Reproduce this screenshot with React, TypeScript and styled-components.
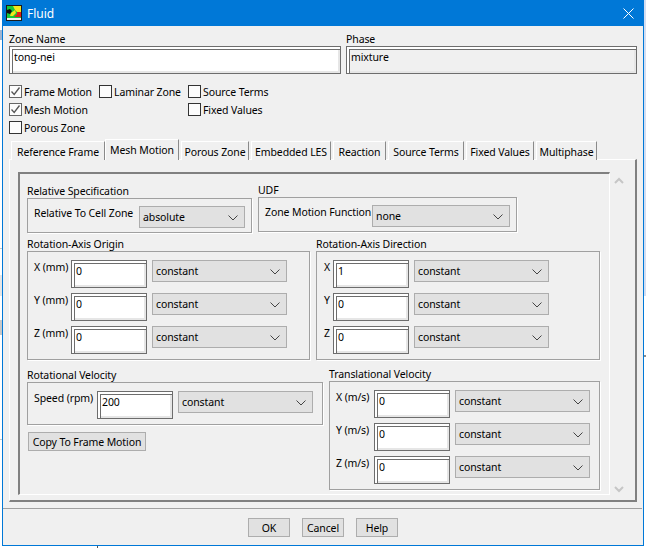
import React from "react";
import styled, { createGlobalStyle } from "styled-components";

const Global = createGlobalStyle`
  html, body { margin: 0; padding: 0; background: #fff; }
  body { font-family: "Noto Sans", "Open Sans", sans-serif; font-size: 10.5px; letter-spacing: -0.1px; color: #000; overflow: hidden; }
  * { box-sizing: border-box; }
`;

const Page = styled.div`
  width: 646px;
  height: 548px;
  padding-left: 2px;
  background:
    linear-gradient(#d3def2, #d3def2) 644px 0 / 2px 296px no-repeat,
    linear-gradient(#8c8c8c, #8c8c8c) 644px 355px / 2px 2px no-repeat,
    linear-gradient(#9fb4d0, #9fb4d0) 0 30px / 2px 10px no-repeat,
    linear-gradient(#c8c8c8, #c8c8c8) 0 248px / 2px 1px no-repeat,
    linear-gradient(#e6e6e6, #e6e6e6) 0 275px / 2px 21px no-repeat,
    linear-gradient(#c8c8c8, #c8c8c8) 0 320px / 2px 15px no-repeat,
    linear-gradient(#c8c8c8, #c8c8c8) 0 439px / 2px 1px no-repeat,
    linear-gradient(#555, #555) 97px 546px / 1px 2px no-repeat,
    #fff;
`;

const Window = styled.div`
  width: 642px;
  height: 546px;
  border: 1px solid #0078d7;
  border-top: 0;
  background: #f0f0f0;
  display: flex;
  flex-direction: column;
`;

const TitleBar = styled.div`
  height: 26px;
  flex: none;
  background: #0078d7;
  color: #fff;
  display: flex;
  align-items: center;
  padding: 0 9px 0 3px;
  font-size: 12px;
  letter-spacing: 0;
`;

const TitleText = styled.span`
  margin-left: 5px;
  flex: 1;
`;

const Form = styled.div`
  padding: 7px 0 0 6px;
  flex: 1;
  display: flex;
  flex-direction: column;
`;

const NameRow = styled.div`
  display: flex;
  gap: 5px;
`;

const Field = styled.div<{ $w: number }>`
  width: ${(p) => p.$w}px;
`;

const Caption = styled.div`
  height: 13px;
  line-height: 12px;
  white-space: nowrap;
`;

const TextBox = styled.input<{ $w?: number; $off?: boolean }>`
  display: block;
  width: ${(p) => (p.$w ? `${p.$w}px` : "100%")};
  height: 28px;
  flex: none;
  border: 1px solid #6d6d6d;
  outline: 0;
  margin: 0;
  padding: 3px 3px 10px 4px;
  font: inherit;
  letter-spacing: inherit;
  line-height: 13px;
  color: #000;
  background: ${(p) => (p.$off ? "#f0f0f0" : "#fff")};
  box-shadow: inset 2px 2px 0 0 #fff, inset 3px 3px 0 0 #6d6d6d, inset -2px -2px 0 0 #e6e6e6;
`;

const ChecksGrid = styled.div`
  display: grid;
  grid-template-columns: 90px 89px 1fr;
  grid-auto-rows: 18px;
  margin-top: 11px;
`;

const CheckItem = styled.div`
  display: flex;
  align-items: flex-start;
  gap: 2px;
  line-height: 15px;
`;

const CheckSquare = styled.span<{ $on?: boolean }>`
  width: 13px;
  height: 13px;
  flex: none;
  border: 1px solid ${(p) => (p.$on ? "#666" : "#333")};
  background: #fcfcfc;
  display: flex;
`;

const TabStrip = styled.div`
  display: flex;
  align-items: flex-end;
  height: 21px;
  padding-left: 2px;
  position: relative;
  z-index: 1;
  margin-bottom: -1px;
`;

const Tab = styled.div<{ $w: number; $on?: boolean; $gap?: number }>`
  width: ${(p) => p.$w}px;
  margin-right: ${(p) => p.$gap ?? 2}px;
  height: ${(p) => (p.$on ? 21 : 19)}px;
  padding: ${(p) => (p.$on ? "1px 0 1px" : "3px 0 0")};
  background: #f0f0f0;
  border-top: 1px solid #fff;
  border-left: 1px solid #fff;
  border-right: 1px solid #8a8a8a;
  display: flex;
  align-items: center;
  justify-content: center;
  white-space: nowrap;
  line-height: 13px;
`;

const TabPanel = styled.div`
  width: 628px;
  height: 343px;
  display: flex;
  padding: 12px 0 7px 8px;
  border-top: 1px solid #fff;
  border-left: 1px solid #fff;
  border-right: 2px solid #808080;
  border-bottom: 2px solid #808080;
`;

const ScrollFrame = styled.div`
  width: 592px;
  height: 323px;
  flex: none;
  padding: 11px 0 0 7px;
  border-top: 2px solid #808080;
  border-left: 2px solid #808080;
  border-right: 1px solid #fff;
  border-bottom: 1px solid #fff;
  display: flex;
  flex-direction: column;
`;

const ScrollTrack = styled.div`
  flex: 1;
  display: flex;
  flex-direction: column;
  justify-content: space-between;
  align-items: center;
  padding: 5px 8px 0 0;
`;

const Row = styled.div<{ $gap?: number }>`
  display: flex;
  gap: 6px;
  margin-top: ${(p) => p.$gap ?? 0}px;
`;

const Column = styled.div`
  display: flex;
  flex-direction: column;
`;

const Group = styled.div<{ $w: number; $up?: boolean }>`
  width: ${(p) => p.$w}px;
  margin-top: ${(p) => (p.$up ? -1 : 0)}px;
`;

const GroupBox = styled.div<{ $h: number; $inset?: number; $top?: number }>`
  height: ${(p) => p.$h}px;
  border: 1px solid #a0a0a0;
  box-shadow: 1px 1px 0 #fff;
  padding: ${(p) => p.$top ?? 8}px 0 0 ${(p) => p.$inset ?? 6}px;
  display: flex;
  flex-direction: column;
  gap: 5px;
`;

const ControlRow = styled.div`
  display: flex;
  align-items: flex-start;
`;

const FieldLabel = styled.div<{ $w: number }>`
  width: ${(p) => p.$w}px;
  flex: none;
  line-height: 14px;
  white-space: nowrap;
`;

const Select = styled.div<{ $w?: number }>`
  width: ${(p) => p.$w ?? 135}px;
  height: 22px;
  flex: none;
  margin-left: 5px;
  background: #e1e1e1;
  border: 1px solid #adadad;
  display: flex;
  align-items: center;
  justify-content: space-between;
  padding: 1px 6px 0 3px;
  line-height: 13px;
`;

const PushButton = styled.div<{ $w: number }>`
  width: ${(p) => p.$w}px;
  height: 19px;
  padding-top: 1px;
  background: #e1e1e1;
  border: 1px solid #adadad;
  display: flex;
  align-items: center;
  justify-content: center;
  line-height: 13px;
  white-space: nowrap;
`;

const CopyWrap = styled.div`
  margin: 7px 0 0 1px;
`;

const Separator = styled.div`
  height: 1px;
  margin: 6px 1px 0 -6px;
  background: #a0a0a0;
`;

const Footer = styled.div`
  display: flex;
  justify-content: center;
  gap: 12px;
  margin: 9px 0 0 -6px;
`;

const Chevron = () => (
  <svg width="10" height="6" viewBox="0 0 10 6" fill="none">
    <path d="M0.5 0.5 L5 5 L9.5 0.5" stroke="#444" strokeWidth="1" />
  </svg>
);

const ScrollArrow = ({ up }: { up?: boolean }) => (
  <svg width="10" height="7" viewBox="0 0 10 7" fill="none">
    <path d={up ? "M1 6 L5 2 L9 6" : "M1 1 L5 5 L9 1"} stroke="#c6c6c6" strokeWidth="2" />
  </svg>
);

const CheckMark = () => (
  <svg width="11" height="11" viewBox="0 0 11 11" fill="none">
    <path d="M1.5 5.5 L4.2 8.5 L9.5 1.5" stroke="#555" strokeWidth="1.3" />
  </svg>
);

const FluentIcon = () => (
  <svg width="16" height="16" viewBox="0 0 16 16">
    <rect width="16" height="16" fill="#1a1a1a" />
    <rect x="1" y="1" width="14" height="12" fill="#16c83a" />
    <path d="M7 1 H15 V7 H11 L9 5 Z" fill="#f4e61c" />
    <path d="M11 7 H15 V12 H8 L11 9 Z" fill="#e0201a" />
    <path d="M5 8 L9 5 L10 8 L7 11 H4 Z" fill="#f4e61c" />
    <path d="M1 5 L4 4 L6 6 L4 9 L1 8 Z" fill="#0c0c0c" />
    <rect x="1" y="13" width="14" height="2" fill="#f0f0f0" />
  </svg>
);

const CloseIcon = () => (
  <svg width="11" height="11" viewBox="0 0 11 11" fill="none">
    <path d="M0.5 0.5 L10.5 10.5 M10.5 0.5 L0.5 10.5" stroke="#fff" strokeWidth="1" />
  </svg>
);

const Check = ({ label, on }: { label?: string; on?: boolean }) =>
  label ? (
    <CheckItem>
      <CheckSquare $on={on}>{on && <CheckMark />}</CheckSquare>
      <span>{label}</span>
    </CheckItem>
  ) : (
    <div />
  );

const Combo = ({ value, w }: { value: string; w?: number }) => (
  <Select $w={w}>
    <span>{value}</span>
    <Chevron />
  </Select>
);

const VarRow = ({ label, w, value }: { label: string; w: number; value: string }) => (
  <ControlRow>
    <FieldLabel $w={w}>{label}</FieldLabel>
    <TextBox readOnly value={value} $w={76} />
    <Combo value="constant" />
  </ControlRow>
);

const tabs = [
  { t: "Reference Frame", w: 94, gap: 0 },
  { t: "Mesh Motion", w: 74, on: true },
  { t: "Porous Zone", w: 68 },
  { t: "Embedded LES", w: 80 },
  { t: "Reaction", w: 53 },
  { t: "Source Terms", w: 76 },
  { t: "Fixed Values", w: 68 },
  { t: "Multiphase", w: 61 },
];

export default function App() {
  return (
    <Page>
      <Global />
      <Window>
        <TitleBar>
          <FluentIcon />
          <TitleText>Fluid</TitleText>
          <CloseIcon />
        </TitleBar>
        <Form>
          <NameRow>
            <Field $w={332}>
              <Caption>Zone Name</Caption>
              <TextBox readOnly value="tong-nei" />
            </Field>
            <Field $w={291}>
              <Caption>Phase</Caption>
              <TextBox readOnly value="mixture" $off />
            </Field>
          </NameRow>
          <ChecksGrid>
            <Check label="Frame Motion" on />
            <Check label="Laminar Zone" />
            <Check label="Source Terms" />
            <Check label="Mesh Motion" on />
            <Check />
            <Check label="Fixed Values" />
            <Check label="Porous Zone" />
          </ChecksGrid>
          <TabStrip>
            {tabs.map((x) => (
              <Tab key={x.t} $w={x.w} $on={x.on} $gap={x.gap}>
                {x.t}
              </Tab>
            ))}
          </TabStrip>
          <TabPanel>
            <ScrollFrame>
              <Row>
                <Group $w={225}>
                  <Caption>Relative Specification</Caption>
                  <GroupBox $h={35} $top={7}>
                    <ControlRow>
                      <FieldLabel $w={100}>Relative To Cell Zone</FieldLabel>
                      <Combo value="absolute" w={106} />
                    </ControlRow>
                  </GroupBox>
                </Group>
                <Group $w={259} $up>
                  <Caption>UDF</Caption>
                  <GroupBox $h={35} $top={7}>
                    <ControlRow>
                      <FieldLabel $w={102}>Zone Motion Function</FieldLabel>
                      <Combo value="none" w={138} />
                    </ControlRow>
                  </GroupBox>
                </Group>
              </Row>
              <Row $gap={5}>
                <Group $w={283}>
                  <Caption>Rotation-Axis Origin</Caption>
                  <GroupBox $h={109}>
                    <VarRow label="X (mm)" w={37} value="0" />
                    <VarRow label="Y (mm)" w={37} value="0" />
                    <VarRow label="Z (mm)" w={37} value="0" />
                  </GroupBox>
                </Group>
                <Group $w={284}>
                  <Caption>Rotation-Axis Direction</Caption>
                  <GroupBox $h={109} $inset={7}>
                    <VarRow label="X" w={9} value="1" />
                    <VarRow label="Y" w={9} value="0" />
                    <VarRow label="Z" w={9} value="0" />
                  </GroupBox>
                </Group>
              </Row>
              <Row $gap={9}>
                <Column>
                  <Group $w={296}>
                    <Caption>Rotational Velocity</Caption>
                    <GroupBox $h={43}>
                      <VarRow label="Speed (rpm)" w={63} value="200" />
                    </GroupBox>
                  </Group>
                  <CopyWrap>
                    <PushButton $w={118}>Copy To Frame Motion</PushButton>
                  </CopyWrap>
                </Column>
                <Group $w={271} $up>
                  <Caption>Translational Velocity</Caption>
                  <GroupBox $h={109}>
                    <VarRow label="X (m/s)" w={38} value="0" />
                    <VarRow label="Y (m/s)" w={38} value="0" />
                    <VarRow label="Z (m/s)" w={38} value="0" />
                  </GroupBox>
                </Group>
              </Row>
            </ScrollFrame>
            <ScrollTrack>
              <ScrollArrow up />
              <ScrollArrow />
            </ScrollTrack>
          </TabPanel>
          <Separator />
          <Footer>
            <PushButton $w={42}>OK</PushButton>
            <PushButton $w={42}>Cancel</PushButton>
            <PushButton $w={42}>Help</PushButton>
          </Footer>
        </Form>
      </Window>
    </Page>
  );
}
